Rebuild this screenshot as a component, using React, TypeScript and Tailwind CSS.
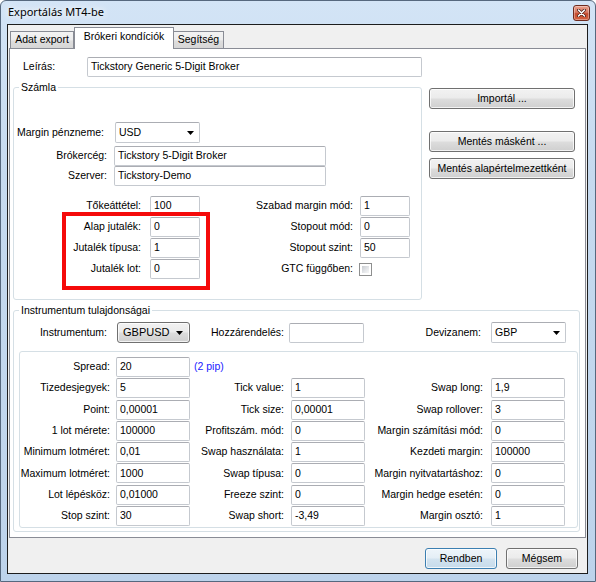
import type { ReactNode } from "react";

const btnBg =
  "bg-[linear-gradient(180deg,#f2f2f2_0%,#ebebeb_48%,#dddddd_52%,#cfcfcf_100%)]";

function Field({ value, className = "" }: { value?: string; className?: string }) {
  return (
    <div
      className={`h-[20px] shrink-0 bg-white border border-[#c5c9cf] border-t-[#abadb3] rounded-[2px] pl-[3px] flex items-center whitespace-nowrap ${className}`}
    >
      {value}
    </div>
  );
}

function Arrow() {
  return (
    <svg width="7" height="4" viewBox="0 0 7 4" className="shrink-0">
      <path d="M0 0h7L3.5 4z" fill="#000" />
    </svg>
  );
}

function Combo({ value, className = "" }: { value: string; className?: string }) {
  return (
    <div
      className={`h-[21px] shrink-0 bg-white border border-[#c5c9cf] border-t-[#abadb3] rounded-[2px] pl-[3px] pr-[5px] flex items-center justify-between ${className}`}
    >
      <span>{value}</span>
      <Arrow />
    </div>
  );
}

function Button({ children, className = "", primary = false }: { children: ReactNode; className?: string; primary?: boolean }) {
  return (
    <div
      className={`h-[21px] shrink-0 rounded-[3px] border flex items-center justify-center shadow-[inset_0_0_0_1px_rgba(255,255,255,0.75)] ${
        primary
          ? "border-[#3c7fb1] bg-[linear-gradient(180deg,#eef5fa_0%,#e4eef6_48%,#d3e3ef_52%,#c6dbeb_100%)]"
          : `border-[#707070] ${btnBg}`
      } ${className}`}
    >
      {children}
    </div>
  );
}

function Label({ children, className = "" }: { children: ReactNode; className?: string }) {
  return <div className={`shrink-0 text-right whitespace-nowrap ${className}`}>{children}</div>;
}

function Check() {
  return (
    <div className="ml-[6px] w-[13px] h-[13px] border border-[#8e8f8f] bg-white p-[2px]">
      <div className="w-full h-full bg-[linear-gradient(135deg,#c9ccd1_0%,#e6e8eb_60%,#f7f7f7_100%)]" />
    </div>
  );
}

const gridRows: [string, string, string, string, string, string][] = [
  ["Tizedesjegyek:", "5", "Tick value:", "1", "Swap long:", "1,9"],
  ["Point:", "0,00001", "Tick size:", "0,00001", "Swap rollover:", "3"],
  ["1 lot mérete:", "100000", "Profitszám. mód:", "0", "Margin számítási mód:", "0"],
  ["Minimum lotméret:", "0,01", "Swap használata:", "1", "Kezdeti margin:", "100000"],
  ["Maximum lotméret:", "1000", "Swap típusa:", "0", "Margin nyitvatartáshoz:", "0"],
  ["Lot lépésköz:", "0,01000", "Freeze szint:", "0", "Margin hedge esetén:", "0"],
  ["Stop szint:", "30", "Swap short:", "-3,49", "Margin osztó:", "1"],
];

export default function App() {
  return (
    <div className="w-[596px] h-[582px] flex flex-col overflow-hidden rounded-t-[6px] border border-[#56687e] bg-[linear-gradient(180deg,#d3e4f6_0%,#c6daef_30%,#bdd3eb_100%)] font-['Liberation_Sans',Arial,sans-serif] text-[10.5px] text-black">
      {/* title bar */}
      <div className="h-[23px] shrink-0 flex items-center justify-between pl-[7px] pr-[5px]">
        <span className="font-['Noto_Sans',sans-serif] text-[11px] [text-shadow:0_0_6px_#fff,0_0_10px_#fff]">
          Exportálás MT4-be
        </span>
        <div className="w-[17px] h-[16px] rounded-[3px] border border-[#6e2b1f] bg-[linear-gradient(180deg,#eaa08c_0%,#d87760_45%,#c44a2e_55%,#d5613f_100%)] flex items-center justify-center shadow-[inset_0_0_0_1px_rgba(255,255,255,0.35)]">
          <svg width="9" height="8" viewBox="0 0 9 8">
            <path d="M1.5 1l6 6M7.5 1l-6 6" stroke="#4a1a10" strokeWidth="3" strokeLinecap="round" />
            <path d="M1.5 1l6 6M7.5 1l-6 6" stroke="#fff" strokeWidth="1.6" strokeLinecap="round" />
          </svg>
        </div>
      </div>

      {/* client area */}
      <div className="ml-[6px] w-[581px] h-[550px] shrink-0 border border-[#1d1d1d] bg-[#f0f0f0] flex flex-col">
        {/* tabs */}
        <div className="h-[23px] shrink-0 flex items-end pl-[2px]">
          <div className={`w-[64px] h-[17px] border border-b-0 border-[#898c95] flex items-center justify-center ${btnBg} bg-[linear-gradient(180deg,#f3f3f3_0%,#ececec_50%,#dedede_55%,#d6d6d6_100%)]`}>
            Adat export
          </div>
          <div className="relative z-10 -mb-px w-[100px] h-[22px] border border-b-0 border-[#898c95] bg-white flex items-center justify-center pb-[3px]">
            Brókeri kondíciók
          </div>
          <div className="-ml-px w-[51px] h-[17px] border border-b-0 border-[#898c95] flex items-center justify-center bg-[linear-gradient(180deg,#f3f3f3_0%,#ececec_50%,#dedede_55%,#d6d6d6_100%)]">
            Segítség
          </div>
        </div>

        {/* tab page */}
        <div className="ml-px w-[577px] h-[490px] shrink-0 border border-[#898c95] bg-white flex flex-col">
          <div className="mt-[8px] h-[20px] flex items-center pl-[13px]">
            <div className="w-[64px]">Leírás:</div>
            <Field value="Tickstory Generic 5-Digit Broker" className="w-[335px]" />
          </div>

          <div className="mt-[4px] pl-[3px] flex items-start">
            {/* Számla */}
            <fieldset className="w-[409px] border border-[#d5dfe5] rounded-[3px] pt-[28px] pb-[20px]">
              <legend className="ml-[5px] px-[2px] leading-[13px]">Számla</legend>
              <div className="h-[21px] flex items-center">
                <div className="w-[101px] pl-[3px] whitespace-nowrap">Margin pénzneme:</div>
                <Combo value="USD" className="w-[85px]" />
              </div>
              <div className="mt-[3px] h-[20px] flex items-center">
                <Label className="w-[93px]">Brókercég:</Label>
                <Field value="Tickstory 5-Digit Broker" className="ml-[7px] w-[212px]" />
              </div>
              <div className="h-[20px] flex items-center">
                <Label className="w-[93px]">Szerver:</Label>
                <Field value="Tickstory-Demo" className="ml-[7px] w-[212px]" />
              </div>

              <div className="mt-[10px] flex">
                <div className="flex flex-col gap-px">
                  <div className="h-[20px] flex items-center">
                    <Label className="w-[127px]">Tőkeáttétel:</Label>
                    <Field value="100" className="ml-[9px] w-[50px]" />
                  </div>
                  <div className="relative flex flex-col gap-px">
                    {[
                      ["Alap jutalék:", "0"],
                      ["Jutalék típusa:", "1"],
                      ["Jutalék lot:", "0"],
                    ].map(([l, v]) => (
                      <div key={l} className="h-[20px] flex items-center">
                        <Label className="w-[127px]">{l}</Label>
                        <Field value={v} className="ml-[9px] w-[50px]" />
                      </div>
                    ))}
                    <div className="absolute left-[48px] -right-[10px] -top-[5px] -bottom-[11px] border-[4px] border-[#f50a0a] pointer-events-none" />
                  </div>
                </div>
                <div className="flex flex-col gap-px">
                  {[
                    ["Szabad margin mód:", "1"],
                    ["Stopout mód:", "0"],
                    ["Stopout szint:", "50"],
                  ].map(([l, v]) => (
                    <div key={l} className="h-[20px] flex items-center">
                      <Label className="w-[153px]">{l}</Label>
                      <Field value={v} className="ml-[7px] w-[50px]" />
                    </div>
                  ))}
                  <div className="h-[20px] flex items-center">
                    <Label className="w-[153px]">GTC függőben:</Label>
                    <Check />
                  </div>
                </div>
              </div>
            </fieldset>

            {/* right buttons */}
            <div className="ml-[7px] mt-[7px] w-[146px] flex flex-col">
              <Button>Importál ...</Button>
              <Button className="mt-[22px]">Mentés másként ...</Button>
              <Button className="mt-[6px]">Mentés alapértelmezettként</Button>
            </div>
          </div>

          {/* Instrumentum */}
          <fieldset className="mt-[4px] ml-[3px] w-[567px] border border-[#d5dfe5] rounded-[3px] pt-[5px] pb-[3px]">
            <legend className="ml-[5px] px-[2px] leading-[13px]">Instrumentum tulajdonságai</legend>
            <div className="h-[21px] flex items-center">
              <Label className="w-[93px]">Instrumentum:</Label>
              <div className={`ml-[10px] w-[73px] h-[21px] rounded-[3px] border border-[#707070] pl-[5px] pr-[6px] flex items-center justify-between shadow-[inset_0_0_0_1px_rgba(255,255,255,0.75)] ${btnBg} text-[11px]`}>
                <span>GBPUSD</span>
                <Arrow />
              </div>
              <Label className="w-[94px]">Hozzárendelés:</Label>
              <Field className="ml-[5px] w-[75px]" />
              <Label className="w-[117px]">Devizanem:</Label>
              <Combo value="GBP" className="ml-[10px] w-[75px]" />
            </div>

            <div className="mt-[8px] ml-[5px] mr-px border border-[#d5dfe5] rounded-[3px] pt-[5px] pb-px flex flex-col gap-[1.3px]">
              <div className="h-[20px] flex items-center">
                <Label className="w-[90px]">Spread:</Label>
                <Field value="20" className="ml-[6px] w-[74px]" />
                <span className="ml-[4px] text-[#1a1aff]">(2 pip)</span>
              </div>
              {gridRows.map(([a, av, b, bv, c, cv]) => (
                <div key={a} className="h-[20px] flex items-center">
                  <Label className="w-[90px]">{a}</Label>
                  <Field value={av} className="ml-[6px] w-[74px]" />
                  <Label className="w-[94px]">{b}</Label>
                  <Field value={bv} className="ml-[7px] w-[74px]" />
                  <Label className="w-[118px]">{c}</Label>
                  <Field value={cv} className="ml-[8px] w-[74px]" />
                </div>
              ))}
            </div>
          </fieldset>
        </div>

        {/* dialog buttons */}
        <div className="mt-[10px] pr-[9px] flex justify-end gap-[9px]">
          <Button primary className="w-[72px]">Rendben</Button>
          <Button className="w-[72px]">Mégsem</Button>
        </div>
      </div>
    </div>
  );
}
